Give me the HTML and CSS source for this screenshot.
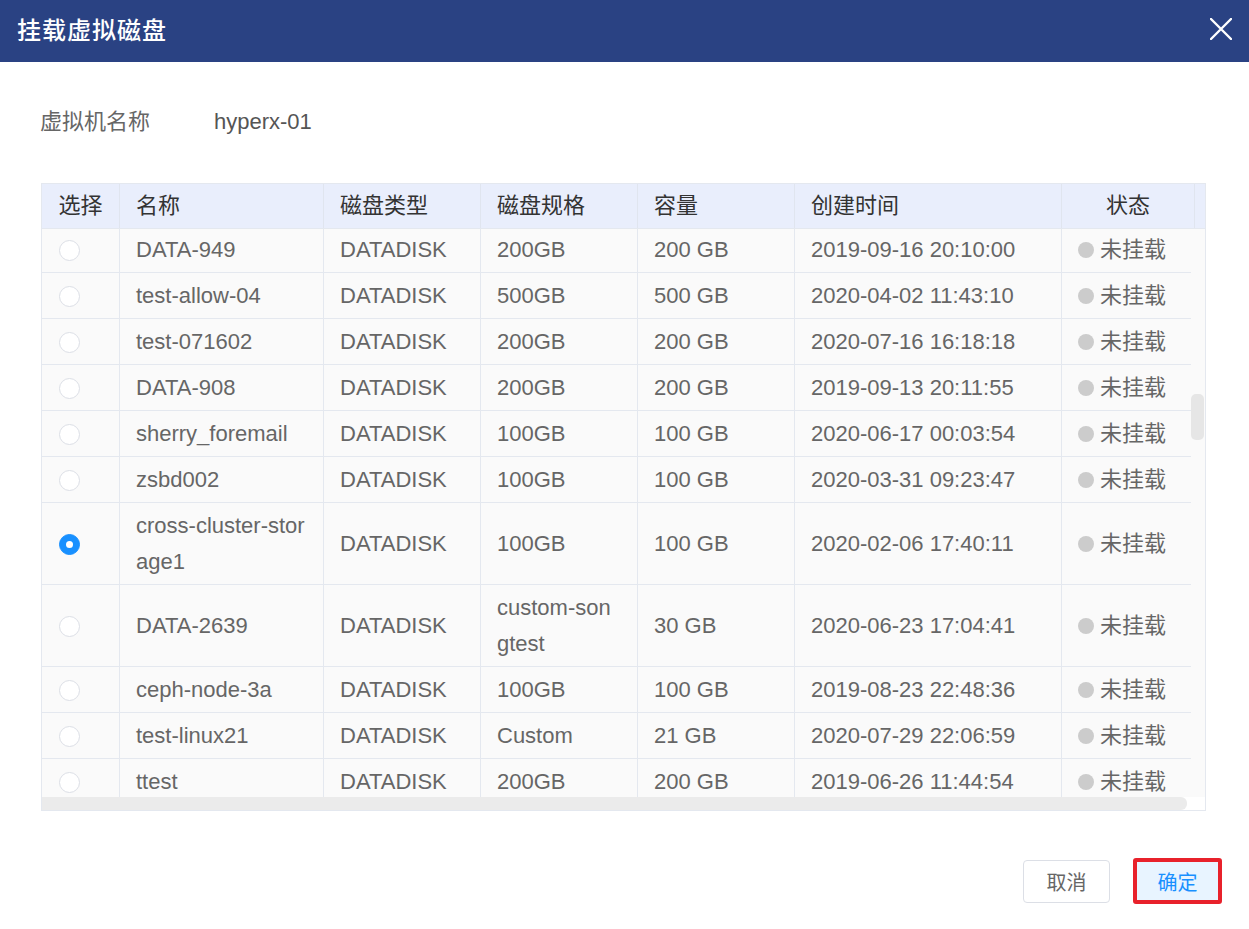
FILE: index.html
```html
<!DOCTYPE html>
<html lang="zh-CN">
<head>
<meta charset="utf-8">
<title>挂载虚拟磁盘</title>
<link rel="stylesheet" href="styles.css">
</head>
<body>
<div class="dialog">
  <div class="dialog-header">
    <span class="dialog-title">挂载虚拟磁盘</span>
    <svg class="close-icon" width="22" height="22" viewBox="0 0 22 22"><path d="M1 1 L21 21 M21 1 L1 21" stroke="#ffffff" stroke-width="2.4" stroke-linecap="round" fill="none"/></svg>
  </div>
  <div class="dialog-content">
    <div class="info-row">
      <span class="info-label">虚拟机名称</span>
      <span class="info-value">hyperx-01</span>
    </div>
    <div class="table">
      <div class="table-head">
        <div class="th th-center">选择</div>
        <div class="th">名称</div>
        <div class="th">磁盘类型</div>
        <div class="th">磁盘规格</div>
        <div class="th">容量</div>
        <div class="th">创建时间</div>
        <div class="th th-center">状态</div>
        <div class="th gutter"></div>
      </div>
      <div class="table-body">
        <div class="body-main">
          <div class="viewport">
            <div class="rows">
              <div class="tr"><div class="td"><span class="radio"></span></div><div class="td">DATA-949</div><div class="td">DATADISK</div><div class="td">200GB</div><div class="td">200 GB</div><div class="td">2019-09-16 20:10:00</div><div class="td status"><span class="dot"></span>未挂载</div></div>
              <div class="tr"><div class="td"><span class="radio"></span></div><div class="td">test-allow-04</div><div class="td">DATADISK</div><div class="td">500GB</div><div class="td">500 GB</div><div class="td">2020-04-02 11:43:10</div><div class="td status"><span class="dot"></span>未挂载</div></div>
              <div class="tr"><div class="td"><span class="radio"></span></div><div class="td">test-071602</div><div class="td">DATADISK</div><div class="td">200GB</div><div class="td">200 GB</div><div class="td">2020-07-16 16:18:18</div><div class="td status"><span class="dot"></span>未挂载</div></div>
              <div class="tr"><div class="td"><span class="radio"></span></div><div class="td">DATA-908</div><div class="td">DATADISK</div><div class="td">200GB</div><div class="td">200 GB</div><div class="td">2019-09-13 20:11:55</div><div class="td status"><span class="dot"></span>未挂载</div></div>
              <div class="tr"><div class="td"><span class="radio"></span></div><div class="td">sherry_foremail</div><div class="td">DATADISK</div><div class="td">100GB</div><div class="td">100 GB</div><div class="td">2020-06-17 00:03:54</div><div class="td status"><span class="dot"></span>未挂载</div></div>
              <div class="tr"><div class="td"><span class="radio"></span></div><div class="td">zsbd002</div><div class="td">DATADISK</div><div class="td">100GB</div><div class="td">100 GB</div><div class="td">2020-03-31 09:23:47</div><div class="td status"><span class="dot"></span>未挂载</div></div>
              <div class="tr"><div class="td"><span class="radio checked"></span></div><div class="td">cross-cluster-storage1</div><div class="td">DATADISK</div><div class="td">100GB</div><div class="td">100 GB</div><div class="td">2020-02-06 17:40:11</div><div class="td status"><span class="dot"></span>未挂载</div></div>
              <div class="tr"><div class="td"><span class="radio"></span></div><div class="td">DATA-2639</div><div class="td">DATADISK</div><div class="td">custom-songtest</div><div class="td">30 GB</div><div class="td">2020-06-23 17:04:41</div><div class="td status"><span class="dot"></span>未挂载</div></div>
              <div class="tr"><div class="td"><span class="radio"></span></div><div class="td">ceph-node-3a</div><div class="td">DATADISK</div><div class="td">100GB</div><div class="td">100 GB</div><div class="td">2019-08-23 22:48:36</div><div class="td status"><span class="dot"></span>未挂载</div></div>
              <div class="tr"><div class="td"><span class="radio"></span></div><div class="td">test-linux21</div><div class="td">DATADISK</div><div class="td">Custom</div><div class="td">21 GB</div><div class="td">2020-07-29 22:06:59</div><div class="td status"><span class="dot"></span>未挂载</div></div>
              <div class="tr"><div class="td"><span class="radio"></span></div><div class="td">ttest</div><div class="td">DATADISK</div><div class="td">200GB</div><div class="td">200 GB</div><div class="td">2019-06-26 11:44:54</div><div class="td status"><span class="dot"></span>未挂载</div></div>
            </div>
          </div>
          <div class="vtrack"><div class="vthumb"></div></div>
        </div>
        <div class="hbar"><div class="hthumb"></div></div>
      </div>
    </div>
  </div>
  <div class="dialog-footer">
    <button class="btn btn-cancel">取消</button>
    <button class="btn btn-ok">确定</button>
  </div>
</div>
</body>
</html>
```
FILE: styles.css
```css
* { box-sizing: border-box; }
html, body { margin: 0; padding: 0; background: #ffffff; }
body {
  font-family: "Liberation Sans", "Noto Sans CJK SC", sans-serif;
  width: 1249px;
  height: 929px;
  overflow: hidden;
}
.dialog { width: 1249px; }
.dialog-header {
  height: 62px;
  background: #2a4283;
  display: flex;
  align-items: center;
  justify-content: space-between;
  padding: 0 17px 6px 17px;
}
.dialog-title {
  color: #ffffff;
  font-size: 24px;
  font-weight: 500;
  letter-spacing: 1px;
}
.close-icon { display: block; margin-top: 2px; }
.dialog-content { padding: 0 44px 0 40px; }
.info-row {
  margin-top: 45px;
  height: 30px;
  line-height: 30px;
  display: flex;
  font-size: 22px;
}
.info-label { width: 174px; color: #666666; }
.info-value { color: #555555; }
.table {
  margin-top: 46px;
  margin-left: 1px;
  width: 1165px;
  border: 1px solid #e4e8ef;
}
.table-head {
  display: grid;
  grid-template-columns: 78px 204px 157px 157px 157px 267px 133px 10px;
  background: #e9eefc;
  height: 45px;
  border-bottom: 1px solid #e4e8ef;
}
.th {
  font-size: 22px;
  color: #333333;
  line-height: 44px;
  padding-left: 16px;
  border-right: 1px solid #e0e5ef;
}
.th-center { text-align: center; padding-left: 0; }
.th.gutter { border-right: none; }
.table-body { height: 581px; display: flex; flex-direction: column; }
.body-main { display: flex; height: 568px; }
.viewport { width: 1149px; height: 568px; overflow: hidden; background: #fafafa; }
.rows { width: 1153px; margin-top: -2px; }
.tr {
  display: grid;
  grid-template-columns: 78px 204px 157px 157px 157px 267px 133px;
  background: #fafafa;
}
.td {
  font-size: 22px;
  color: #666666;
  line-height: 36px;
  padding: 5px 16px 4px 16px;
  border-right: 1px solid #e4e8ef;
  border-bottom: 1px solid #e4e8ef;
  display: flex;
  align-items: center;
  word-break: break-all;
}
.td:first-child { padding-left: 17px; }
.radio {
  width: 21px;
  height: 21px;
  border-radius: 50%;
  border: 1px solid #dcdfe6;
  background: #ffffff;
  display: flex;
  align-items: center;
  justify-content: center;
}
.radio.checked { background: #1890ff; border-color: #1890ff; }
.radio.checked::after {
  content: "";
  width: 7px;
  height: 7px;
  border-radius: 50%;
  background: #ffffff;
}
.dot {
  width: 16px;
  height: 16px;
  border-radius: 50%;
  background: #cccccc;
  margin-right: 6px;
  flex: none;
}
.vtrack { width: 14px; height: 568px; background: #fafafa; }
.vthumb {
  width: 13px;
  height: 46px;
  margin-top: 165px;
  background: #e6e6e6;
  border-radius: 5px;
}
.hbar { height: 13px; background: #ffffff; }
.hthumb {
  width: 1145px;
  height: 13px;
  background: #ebebeb;
  border-radius: 0 6px 6px 0;
}
.dialog-footer {
  display: flex;
  justify-content: flex-end;
  align-items: center;
  gap: 23px;
  padding-right: 27px;
  margin-top: 47px;
  height: 46px;
}
.btn {
  font-family: "Liberation Sans", "Noto Sans CJK SC", sans-serif;
  font-size: 20px;
  border-radius: 4px;
  cursor: pointer;
  padding: 0;
}
.btn-cancel {
  width: 87px;
  height: 43px;
  background: #ffffff;
  border: 1px solid #dcdfe6;
  color: #666666;
}
.btn-ok {
  width: 89px;
  height: 46px;
  background: #e8f4ff;
  border: 4px solid #e8212b;
  color: #1890ff;
  border-radius: 3px;
}
```
